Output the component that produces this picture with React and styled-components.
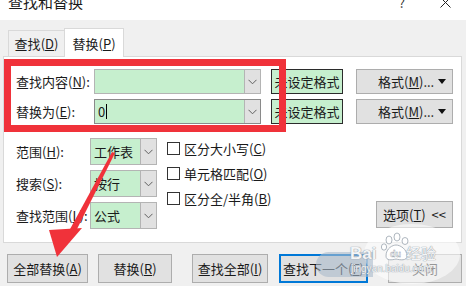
import React from 'react';
import styled, { createGlobalStyle } from 'styled-components';

const Global = createGlobalStyle`
  html, body { margin: 0; padding: 0; }
  body { font-family: "Noto Sans CJK SC", "Liberation Sans", sans-serif; }
`

const Dialog = styled.div`
  position: relative;
  width: 466px;
  height: 286px;
  overflow: hidden;
  background: #f0f0f0;
  color: #1a1a1a;
  font-size: 13px;
`

const TitleBar = styled.div`
  height: 20px;
  background: #fff;
  display: flex;
  align-items: flex-start;
  padding: 0 15px 0 8px;
`

const Title = styled.div`
  font-size: 15px;
  line-height: 15px;
  margin-top: -6px;
  flex: 1;
`

const Help = styled.div`
  font-size: 13px;
  line-height: 13px;
  margin-top: -4px;
  color: #333;
  margin-right: 35px;
`

const TabStrip = styled.div`
  height: 36px;
  display: flex;
  align-items: flex-end;
  padding-left: 8px;
`

const Tab = styled.div`
  box-sizing: border-box;
  height: ${p => (p.$active ? 29 : 26)}px;
  width: ${p => (p.$active ? 60 : 57)}px;
  margin-left: ${p => (p.$active ? -1 : 0)}px;
  margin-bottom: ${p => (p.$active ? -1 : 0)}px;
  background: ${p => (p.$active ? '#fff' : '#f0f0f0')};
  border: 1px solid #d9d9d9;
  border-bottom: none;
  display: flex;
  align-items: center;
  justify-content: center;
  line-height: 13px;
  position: relative;
  z-index: 1;
`

const Panel = styled.div`
  box-sizing: border-box;
  margin: 0 4px 0 3px;
  height: 187px;
  background: #fff;
  border: 1px solid #d9d9d9;
  padding: 12px 8px 0 12px;
`

const FieldRows = styled.div`
  display: flex;
  flex-direction: column;
  gap: 5px;
`

const FieldRow = styled.div`
  display: flex;
  align-items: center;
  height: 25px;
`

const Label = styled.div`
  width: ${p => p.$w}px;
  flex-shrink: 0;
  white-space: nowrap;
  line-height: 13px;
`

const Combo = styled.div`
  box-sizing: border-box;
  width: ${p => p.$w}px;
  height: ${p => p.$h}px;
  display: flex;
  border: 1px solid ${p => (p.$dark ? '#8a8a8a' : '#b4b4b4')};
  background: #c6efce;
  position: relative;
  z-index: 1;
`

const ComboText = styled.div`
  flex: 1;
  display: flex;
  align-items: center;
  padding-left: 3px;
  line-height: 13px;
  white-space: nowrap;
  overflow: hidden;
`

const Caret = styled.span`
  display: inline-block;
  width: 1px;
  height: 15px;
  background: #000;
  margin-left: 1px;
`

const ComboArrow = styled.div`
  width: 15px;
  background: #e1e1e1;
  border-left: 1px solid #b4b4b4;
  display: flex;
  align-items: center;
  justify-content: center;
`

const Button = styled.div`
  box-sizing: border-box;
  width: ${p => p.$w}px;
  height: ${p => p.$h || 25}px;
  margin-left: ${p => p.$ml || 0}px;
  flex-shrink: 0;
  display: flex;
  align-items: center;
  justify-content: center;
  background: ${p => (p.$green ? '#c6efce' : '#e1e1e1')};
  border: ${p => (p.$focus ? '2px solid #0078d7' : p.$green ? '1px solid #2b2b2b' : '1px solid #adadad')};
  line-height: 13px;
  white-space: nowrap;
`

const MenuButton = styled(Button)`
  justify-content: flex-start;
  padding-left: 21px;
  gap: 0;
`

const MenuTriangle = styled.span`
  margin-left: auto;
  margin-right: 6px;
  width: 0;
  height: 0;
  border-left: 4px solid transparent;
  border-right: 4px solid transparent;
  border-top: 5px solid #111;
`

const Options = styled.div`
  display: flex;
  margin-top: 14px;
`

const OptionGrid = styled.div`
  display: grid;
  grid-template-columns: 74px 67px;
  grid-auto-rows: 27px;
  row-gap: 5px;
  align-items: center;
`

const Checks = styled.div`
  display: flex;
  flex-direction: column;
  gap: 12px;
  margin-left: 10px;
  padding-top: 4px;
`

const CheckRow = styled.div`
  display: flex;
  align-items: center;
  height: 13px;
  line-height: 13px;
  white-space: nowrap;
`

const Box = styled.span`
  box-sizing: border-box;
  width: 13px;
  height: 13px;
  border: 1px solid #333;
  background: #fff;
  margin-right: 4px;
`

const OptionsButton = styled(Button)`
  margin-left: auto;
  align-self: flex-end;
  margin-bottom: 1px;
`

const Footer = styled.div`
  display: flex;
  margin-top: 11px;
`

const Overlay = styled.svg`
  position: absolute;
  left: 0;
  top: 0;
  pointer-events: none;
  z-index: 5;
`

const RedFrame = styled.div`
  position: absolute;
  left: 4px;
  top: 59px;
  width: 282px;
  height: 73px;
  box-sizing: border-box;
  border: 7px solid #f0323a;
  z-index: 4;
  pointer-events: none;
`

const Watermark = styled.div`
  position: absolute;
  left: 316px;
  top: 232px;
  width: 150px;
  height: 54px;
  z-index: 6;
  pointer-events: none;
`

const Glow = styled.div`
  position: absolute;
  left: 48px;
  top: -8px;
  width: 96px;
  height: 60px;
  border-radius: 50%;
  background: rgba(255, 255, 255, 0.55);
`

const Smudge = styled.div`
  position: absolute;
  left: 0;
  top: 20px;
  width: 57px;
  height: 25px;
  border-radius: 14px 0 0 14px;
  background: rgba(170, 186, 204, 0.6);
`

const MarkLine = styled.div`
  position: absolute;
  left: ${p => p.$x}px;
  top: ${p => p.$y}px;
  font-family: ${p => (p.$cjk ? '"Noto Sans CJK SC"' : '"Liberation Sans"')}, sans-serif;
  font-size: ${p => p.$size}px;
  font-weight: ${p => (p.$bold ? 700 : 400)};
  line-height: 1;
  color: rgba(255, 255, 255, 0.92);
  text-shadow: 0 0 1px #8d98a4, 0 0 1px #8d98a4;
  white-space: nowrap;
`

const Chevron = () => (
  <svg width="9" height="6" viewBox="0 0 9 6">
    <polyline points="0.5,0.8 4.5,4.8 8.5,0.8" fill="none" stroke="#606060" strokeWidth="1" />
  </svg>
)

const Key = ({ k }) => <>(<u>{k}</u>)</>

function Select({ value }) {
  return (
    <Combo $w={67} $h={27}>
      <ComboText>{value}</ComboText>
      <ComboArrow><Chevron /></ComboArrow>
    </Combo>
  )
}

export default function App() {
  return (
    <Dialog>
      <Global />
      <TitleBar>
        <Title>查找和替换</Title>
        <Help>?</Help>
        <svg width="11" height="11" viewBox="0 0 11 11" style={{ marginTop: -3 }}>
          <path d="M0.5 0.5 L10.5 10.5 M10.5 0.5 L0.5 10.5" stroke="#222" strokeWidth="1" />
        </svg>
      </TitleBar>

      <TabStrip>
        <Tab>查找<Key k="D" /></Tab>
        <Tab $active>替换<Key k="P" /></Tab>
      </TabStrip>

      <Panel>
        <FieldRows>
          <FieldRow>
            <Label $w={78}>查找内容<Key k="N" />:</Label>
            <Combo $w={167} $h={25}>
              <ComboText />
              <ComboArrow><Chevron /></ComboArrow>
            </Combo>
            <Button $w={72} $ml={10} $green>未设定格式</Button>
            <MenuButton $w={97} $ml={13}>格式<Key k="M" />...<MenuTriangle /></MenuButton>
          </FieldRow>
          <FieldRow>
            <Label $w={78}>替换为<Key k="E" />:</Label>
            <Combo $w={167} $h={25} $dark>
              <ComboText>0<Caret /></ComboText>
              <ComboArrow><Chevron /></ComboArrow>
            </Combo>
            <Button $w={72} $ml={10} $green>未设定格式</Button>
            <MenuButton $w={97} $ml={13}>格式<Key k="M" />...<MenuTriangle /></MenuButton>
          </FieldRow>
        </FieldRows>

        <Options>
          <OptionGrid>
            <Label $w={74}>范围<Key k="H" />:</Label>
            <Select value="工作表" />
            <Label $w={74}>搜索<Key k="S" />:</Label>
            <Select value="按行" />
            <Label $w={74}>查找范围<Key k="L" />:</Label>
            <Select value="公式" />
          </OptionGrid>
          <Checks>
            <CheckRow><Box />区分大小写<Key k="C" /></CheckRow>
            <CheckRow><Box />单元格匹配<Key k="O" /></CheckRow>
            <CheckRow><Box />区分全/半角<Key k="B" /></CheckRow>
          </Checks>
          <OptionsButton $w={77} $h={27}>选项<Key k="T" />&nbsp;&nbsp;&lt;&lt;</OptionsButton>
        </Options>
      </Panel>

      <Footer>
        <Button $w={81} $h={29} $ml={7}>全部替换<Key k="A" /></Button>
        <Button $w={74} $h={29} $ml={10}>替换<Key k="R" /></Button>
        <Button $w={76} $h={29} $ml={20}>查找全部<Key k="I" /></Button>
        <Button $w={89} $h={29} $ml={11} $focus>查找下一个<Key k="F" /></Button>
        <Button $w={74} $h={29} $ml={20}>关闭</Button>
      </Footer>

      <RedFrame />

      <Overlay width="466" height="286" viewBox="0 0 466 286">
        <polygon points="112,152 115,153 75,233 69,231" fill="#f0323a" />
        <polygon points="49,230 82,228 57,257" fill="#f0323a" />
      </Overlay>

      <Watermark>
        <Glow />
        <Smudge />
        <MarkLine $x={34} $y={13} $size={17} $bold>Bai</MarkLine>
        <svg width="32" height="30" viewBox="0 0 32 30" style={{ position: 'absolute', left: 64, top: 0 }}>
          <g fill="rgba(255,255,255,0.9)" stroke="#9aa4ae" strokeWidth="0.8">
            <ellipse cx="9" cy="8" rx="3" ry="4" />
            <ellipse cx="17" cy="5" rx="3" ry="4" />
            <ellipse cx="25" cy="9" rx="3" ry="3.5" />
            <ellipse cx="4" cy="15" rx="2.6" ry="3.2" />
            <path d="M6 24 C6 16 13 13 16 13 C20 13 27 17 27 24 C27 29 20 28 16 27 C12 28 6 29 6 24 Z" />
          </g>
          <text x="10" y="25" fontSize="9" fontFamily="Liberation Sans" fontWeight="700" fill="#fff" stroke="#8d98a4" strokeWidth="0.4">du</text>
        </svg>
        <MarkLine $x={90} $y={13} $size={15} $cjk>经验</MarkLine>
        <MarkLine $x={35} $y={32} $size={10}>jingyan.baidu.com</MarkLine>
      </Watermark>
    </Dialog>
  )
}
